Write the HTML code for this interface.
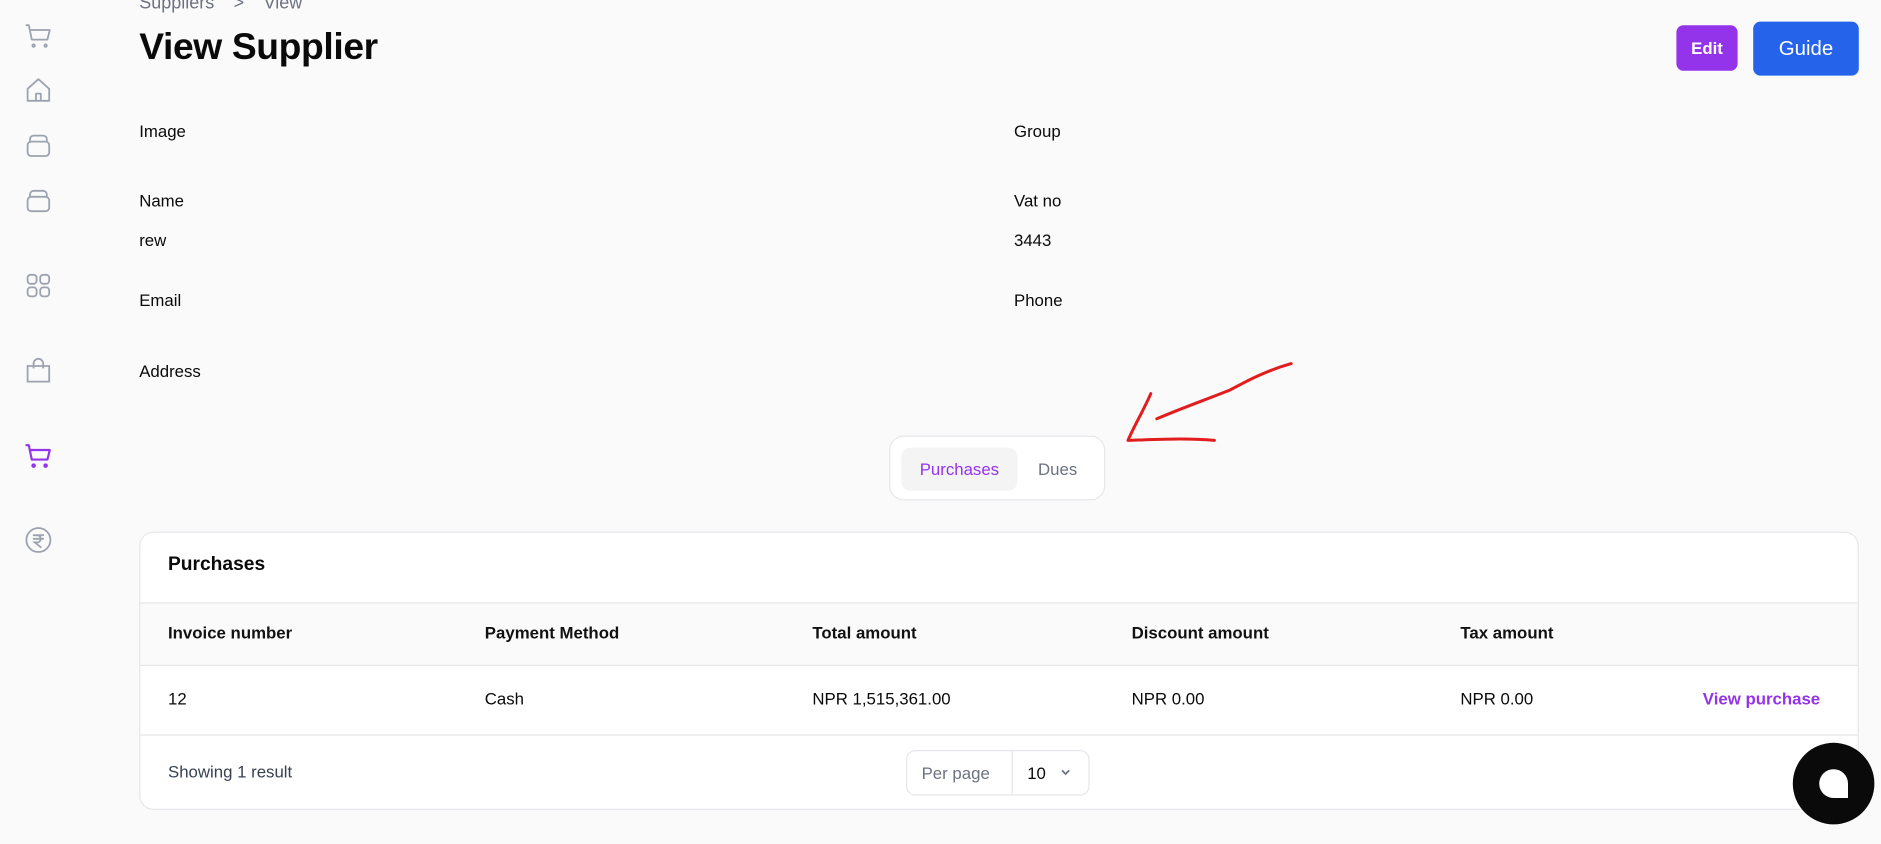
<!DOCTYPE html>
<html><head><meta charset="utf-8"><style>
html,body{margin:0;padding:0;background:#fafafa;overflow:hidden}
body{width:1881px;height:844px}
#w{width:1568px;height:704px;transform:scale(1.2);transform-origin:0 0;position:relative;font-family:"Liberation Sans",sans-serif;color:#0a0a0a}
.a{position:absolute}
.ic{position:absolute;left:20px;width:24px;height:24px}
.lbl{position:absolute;font-size:14px;font-weight:500}
.val{position:absolute;font-size:14px}
.th{position:absolute;top:519px;font-size:14px;font-weight:bold;color:#111}
.td{position:absolute;top:574px;font-size:14px}
</style></head><body><div id="w">
<svg class="ic" style="top:18px" viewBox="0 0 24 24" fill="none" stroke="#9ca3af" stroke-width="1.5" stroke-linecap="round" stroke-linejoin="round"><path d="M2 3h2l2.5 12h13l2-8H6"/><circle cx="8" cy="20" r="1"/><circle cx="18" cy="20" r="1"/></svg>
<svg class="ic" style="top:63px" viewBox="0 0 24 24" fill="none" stroke="#9ca3af" stroke-width="1.5" stroke-linejoin="round"><path d="M3 11l9-8 9 8v10H3z"/><path d="M10 21v-6h4v6"/></svg>
<svg class="ic" style="top:109px" viewBox="0 0 24 24" fill="none" stroke="#9ca3af" stroke-width="1.5"><rect x="3" y="9" width="18" height="12" rx="3"/><path d="M5 9V7a3 3 0 013-3h8a3 3 0 013 3v2"/></svg>
<svg class="ic" style="top:155px" viewBox="0 0 24 24" fill="none" stroke="#9ca3af" stroke-width="1.5"><rect x="3" y="9" width="18" height="12" rx="3"/><path d="M5 9V7a3 3 0 013-3h8a3 3 0 013 3v2"/></svg>
<svg class="ic" style="top:226px" viewBox="0 0 24 24" fill="none" stroke="#9ca3af" stroke-width="1.5"><rect x="3" y="3" width="7.5" height="7.5" rx="2.5"/><rect x="13.5" y="3" width="7.5" height="7.5" rx="2.5"/><rect x="3" y="13.5" width="7.5" height="7.5" rx="2.5"/><rect x="13.5" y="13.5" width="7.5" height="7.5" rx="2.5"/></svg>
<svg class="ic" style="top:297px" viewBox="0 0 24 24" fill="none" stroke="#9ca3af" stroke-width="1.5"><path d="M3 8h18v13H3z"/><path d="M8 10V6a4 4 0 018 0v4"/></svg>
<svg class="ic" style="top:368px" viewBox="0 0 24 24" fill="none" stroke="#9333ea" stroke-width="1.8" stroke-linecap="round" stroke-linejoin="round"><path d="M2 3h2l2.5 12h13l2-8H6"/><circle cx="8" cy="20" r="1"/><circle cx="18" cy="20" r="1"/></svg>
<svg class="ic" style="top:438px" viewBox="0 0 24 24" fill="none" stroke="#9ca3af" stroke-width="1.5" stroke-linecap="round"><circle cx="12" cy="12" r="10"/><path d="M8 8h8M8 11h8M11 8a3 3 0 010 6H9l5 4"/></svg>

<div class="a" style="left:116px;top:-6px;font-size:15px;color:#6b7280">Suppliers <span style="margin:0 12px">&gt;</span> View</div>
<div class="a" style="left:116px;top:21px;font-size:31px;font-weight:bold;letter-spacing:-0.3px">View Supplier</div>
<div class="a" style="left:1397px;top:21px;width:51px;height:38px;background:#9333ea;border-radius:6px;color:#fff;font-weight:bold;font-size:14px;line-height:38px;text-align:center">Edit</div>
<div class="a" style="left:1461px;top:18px;width:88px;height:45px;background:#2563eb;border-radius:6px;color:#fff;font-size:17px;line-height:45px;text-align:center">Guide</div>

<div class="lbl" style="left:116px;top:101px">Image</div>
<div class="lbl" style="left:845px;top:101px">Group</div>
<div class="lbl" style="left:116px;top:159px">Name</div>
<div class="lbl" style="left:845px;top:159px">Vat no</div>
<div class="val" style="left:116px;top:192px">rew</div>
<div class="val" style="left:845px;top:192px">3443</div>
<div class="lbl" style="left:116px;top:242px">Email</div>
<div class="lbl" style="left:845px;top:242px">Phone</div>
<div class="lbl" style="left:116px;top:301px">Address</div>

<svg class="a" style="left:930px;top:295px" width="160" height="85" viewBox="0 0 160 85" fill="none" stroke="#e11d1d" stroke-width="2.5" stroke-linecap="round" stroke-linejoin="round"><path d="M146 8C125 14 110 22 95 30C75 38 55 45 34 54"/><path d="M29 33C24 45 14 62 10 72C40 71 60 70 82 72"/></svg>

<div class="a" style="left:741px;top:363px;width:180px;height:54px;background:#fff;border:1px solid #e5e7eb;border-radius:12px;box-sizing:border-box"></div>
<div class="a" style="left:751px;top:373px;width:97px;height:36px;background:#f4f4f5;border-radius:8px;color:#9333ea;font-size:14px;font-weight:500;line-height:36px;text-align:center">Purchases</div>
<div class="a" style="left:865px;top:373px;line-height:36px;font-size:14px;color:#6b7280">Dues</div>

<div class="a" style="left:116px;top:443px;width:1433px;height:232px;background:#fff;border:1px solid #e5e7eb;border-radius:12px;box-sizing:border-box;overflow:hidden">
 <div class="a" style="left:0;top:58px;width:100%;height:51px;background:#fafafa;border-top:1px solid #e5e7eb;border-bottom:1px solid #e5e7eb"></div>
 <div class="a" style="left:0;top:168px;width:100%;border-top:1px solid #e5e7eb"></div>
</div>
<div class="a" style="left:140px;top:462px;font-size:16px;font-weight:bold">Purchases</div>
<div class="th" style="left:140px">Invoice number</div>
<div class="th" style="left:404px">Payment Method</div>
<div class="th" style="left:677px">Total amount</div>
<div class="th" style="left:943px">Discount amount</div>
<div class="th" style="left:1217px">Tax amount</div>
<div class="td" style="left:140px">12</div>
<div class="td" style="left:404px">Cash</div>
<div class="td" style="left:677px">NPR 1,515,361.00</div>
<div class="td" style="left:943px">NPR 0.00</div>
<div class="td" style="left:1217px">NPR 0.00</div>
<div class="td" style="left:1419px;color:#9333ea;font-weight:bold">View purchase</div>
<div class="a" style="left:140px;top:635px;font-size:14px;color:#374151">Showing 1 result</div>
<div class="a" style="left:755px;top:625px;width:153px;height:38px;border:1px solid #e5e7eb;border-radius:8px;box-sizing:border-box;background:#fff">
 <div class="a" style="left:12px;top:0;line-height:36px;font-size:14px;color:#6b7280">Per page</div>
 <div class="a" style="left:87px;top:0;height:36px;border-left:1px solid #e5e7eb"></div>
 <div class="a" style="left:100px;top:0;line-height:36px;font-size:14px">10</div>
 <svg class="a" style="left:127px;top:13px" width="10" height="10" viewBox="0 0 10 10" fill="none" stroke="#6b7280" stroke-width="1.5"><path d="M2 3l3 3 3-3"/></svg>
</div>
<div class="a" style="left:1494px;top:619px;width:68px;height:68px;border-radius:50%;background:#0a0a0a"></div>
<div class="a" style="left:1516px;top:641px;width:24px;height:24px;background:#fff;border-radius:12px 12px 0 12px"></div>
</div></body></html>
